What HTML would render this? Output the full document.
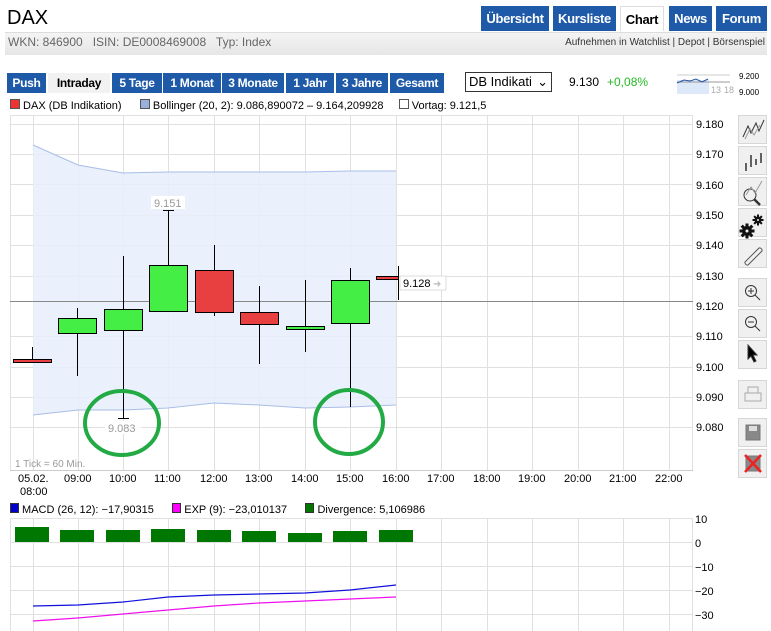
<!DOCTYPE html><html><head><meta charset="utf-8"><style>
body{margin:0;width:771px;height:631px;overflow:hidden;background:#fff;font-family:"Liberation Sans",sans-serif;position:relative}
.a{position:absolute}
.tab{position:absolute;top:6px;height:25px;background:#1f5aa8;color:#fff;font-weight:bold;font-size:13px;line-height:25px;text-align:center;letter-spacing:-0.3px}
.btn{position:absolute;top:73px;height:20px;background:#1f5aa8;color:#fff;font-weight:bold;font-size:12px;line-height:20px;text-align:center;letter-spacing:-0.3px}
.tb{position:absolute;left:738px;width:29px;height:29px;background:#f0f0f0;border:1px solid #d6d6d6;box-sizing:border-box}
svg text{font-family:"Liberation Sans",sans-serif}
</style></head><body>
<div class="a" style="left:7px;top:7px;font-size:20px">DAX</div>
<div class="tab" style="left:481px;width:68px">Übersicht</div>
<div class="tab" style="left:553px;width:63px">Kursliste</div>
<div class="tab" style="left:620px;width:44px;background:#fff;color:#000;border:1px solid #ddd;border-bottom:none;box-sizing:border-box">Chart</div>
<div class="tab" style="left:669px;width:43px">News</div>
<div class="tab" style="left:716px;width:51px">Forum</div>
<div class="a" style="left:5px;top:32px;width:762px;height:22px;background:linear-gradient(#f4f4f4,#e6e6e6);border-top:1px solid #ddd"></div>
<div class="a" style="left:8px;top:35px;font-size:12px;color:#666">WKN: 846900&nbsp;&nbsp; ISIN: DE0008469008&nbsp;&nbsp; Typ: Index</div>
<div class="a" style="right:6px;top:37px;font-size:10px;color:#333">Aufnehmen in Watchlist | Depot | Börsenspiel</div>
<div class="btn" style="left:7px;width:39px">Push</div>
<div class="btn" style="left:48px;width:62px;background:#f2f2f2;color:#000">Intraday</div>
<div class="btn" style="left:112px;width:50px">5 Tage</div>
<div class="btn" style="left:163px;width:58px">1 Monat</div>
<div class="btn" style="left:222px;width:62px">3 Monate</div>
<div class="btn" style="left:286px;width:48px">1 Jahr</div>
<div class="btn" style="left:336px;width:52px">3 Jahre</div>
<div class="btn" style="left:390px;width:54px">Gesamt</div>
<div class="a" style="left:465px;top:72px;width:87px;height:20px;border:1px solid #333;box-sizing:border-box;font-size:13px;line-height:18px;padding-left:3px">DB Indikati <span style="float:right;margin-right:3px">&#8964;</span></div>
<div class="a" style="left:569px;top:75px;font-size:12px">9.130</div>
<div class="a" style="left:607px;top:75px;font-size:12px;color:#22bb22">+0,08%</div>
<svg class="a" style="left:676px;top:70px" width="95" height="26"><rect x="1" y="10" width="32" height="14" fill="#dde8f8"/><line x1="1" y1="12" x2="54" y2="12" stroke="#999"/><line x1="1" y1="5" x2="54" y2="5" stroke="#ccc"/><polyline points="1,13 8,10 14,11 20,9 26,12 32,9" fill="none" stroke="#2255aa"/><text x="35" y="23" font-size="9" fill="#aaa">13</text><text x="48" y="23" font-size="9" fill="#aaa">18</text><text x="63" y="9" font-size="8">9.200</text><text x="63" y="25" font-size="8">9.000</text></svg>
<div class="a" style="left:10px;top:99px;font-size:11px"><span style="display:inline-block;width:8px;height:8px;background:#e33;border:1px solid #555"></span> DAX (DB Indikation)&nbsp;&nbsp;&nbsp;&nbsp;&nbsp; <span style="display:inline-block;width:8px;height:8px;background:#9ab0dc;border:1px solid #555"></span> Bollinger (20, 2): 9.086,890072 – 9.164,209928&nbsp;&nbsp;&nbsp;&nbsp; <span style="display:inline-block;width:8px;height:8px;background:#fff;border:1px solid #555"></span> Vortag: 9.121,5</div>
<div class="a" style="left:10px;top:503px;font-size:11px"><span style="display:inline-block;width:7px;height:8px;background:#00c;border:1px solid #333"></span> MACD (26, 12): −17,90315&nbsp;&nbsp;&nbsp;&nbsp;&nbsp; <span style="display:inline-block;width:7px;height:8px;background:#f0f;border:1px solid #333"></span> EXP (9): −23,010137&nbsp;&nbsp;&nbsp;&nbsp;&nbsp; <span style="display:inline-block;width:7px;height:8px;background:#070;border:1px solid #333"></span> Divergence: 5,106986</div>
<svg class="a" style="left:0;top:0" width="771" height="631">
<g stroke="#e0e0e0" stroke-width="1">
<line x1="10" y1="115.5" x2="693" y2="115.5"/>
<line x1="10" y1="124.5" x2="693" y2="124.5"/><line x1="10" y1="154.5" x2="693" y2="154.5"/><line x1="10" y1="184.5" x2="693" y2="184.5"/><line x1="10" y1="215.5" x2="693" y2="215.5"/><line x1="10" y1="245.5" x2="693" y2="245.5"/><line x1="10" y1="276.5" x2="693" y2="276.5"/><line x1="10" y1="336.5" x2="693" y2="336.5"/><line x1="10" y1="367.5" x2="693" y2="367.5"/><line x1="10" y1="397.5" x2="693" y2="397.5"/><line x1="10" y1="427.5" x2="693" y2="427.5"/>
<line x1="33.5" y1="115" x2="33.5" y2="470"/><line x1="78.5" y1="115" x2="78.5" y2="470"/><line x1="123.5" y1="115" x2="123.5" y2="470"/><line x1="168.5" y1="115" x2="168.5" y2="470"/><line x1="214.5" y1="115" x2="214.5" y2="470"/><line x1="259.5" y1="115" x2="259.5" y2="470"/><line x1="305.5" y1="115" x2="305.5" y2="470"/><line x1="350.5" y1="115" x2="350.5" y2="470"/><line x1="396.5" y1="115" x2="396.5" y2="470"/><line x1="441.5" y1="115" x2="441.5" y2="470"/><line x1="487.5" y1="115" x2="487.5" y2="470"/><line x1="532.5" y1="115" x2="532.5" y2="470"/><line x1="578.5" y1="115" x2="578.5" y2="470"/><line x1="623.5" y1="115" x2="623.5" y2="470"/><line x1="669.5" y1="115" x2="669.5" y2="470"/>
<line x1="10.5" y1="115" x2="10.5" y2="470"/><line x1="692.5" y1="115" x2="692.5" y2="470"/><line x1="10" y1="470.5" x2="693" y2="470.5" stroke="#ccc"/>
<line x1="10" y1="518.5" x2="693" y2="518.5"/><line x1="10" y1="542.5" x2="693" y2="542.5"/><line x1="10" y1="566.5" x2="693" y2="566.5"/><line x1="10" y1="590.5" x2="693" y2="590.5"/><line x1="10" y1="614.5" x2="693" y2="614.5"/>
<line x1="10.5" y1="518" x2="10.5" y2="631"/><line x1="692.5" y1="518" x2="692.5" y2="631"/>
<line x1="33.5" y1="518" x2="33.5" y2="631"/><line x1="78.5" y1="518" x2="78.5" y2="631"/><line x1="123.5" y1="518" x2="123.5" y2="631"/><line x1="168.5" y1="518" x2="168.5" y2="631"/><line x1="214.5" y1="518" x2="214.5" y2="631"/><line x1="259.5" y1="518" x2="259.5" y2="631"/><line x1="305.5" y1="518" x2="305.5" y2="631"/><line x1="350.5" y1="518" x2="350.5" y2="631"/><line x1="396.5" y1="518" x2="396.5" y2="631"/><line x1="441.5" y1="518" x2="441.5" y2="631"/><line x1="487.5" y1="518" x2="487.5" y2="631"/><line x1="532.5" y1="518" x2="532.5" y2="631"/><line x1="578.5" y1="518" x2="578.5" y2="631"/><line x1="623.5" y1="518" x2="623.5" y2="631"/><line x1="669.5" y1="518" x2="669.5" y2="631"/>
</g>
<polygon points="33,145 78,165 123,173 168,172 214,172 259,172 305,172 350,171 396,171 396,405 350,407 305,408 259,405 214,403 168,408 123,410 78,410 33,415" fill="#e6eefb" fill-opacity="0.85"/>
<polyline points="33,145 78,165 123,173 168,172 214,172 259,172 305,172 350,171 396,171" fill="none" stroke="#a9bde6"/>
<polyline points="33,415 78,410 123,410 168,408 214,403 259,405 305,408 350,407 396,405" fill="none" stroke="#a9bde6"/>
<line x1="10" y1="301.5" x2="693" y2="301.5" stroke="#888"/>
<g stroke="#000" stroke-width="1">
<line x1="32.5" y1="347" x2="32.5" y2="363"/><rect x="13.5" y="359.5" width="38" height="3" fill="#e84040"/>
<line x1="77.5" y1="308" x2="77.5" y2="376"/><rect x="58.5" y="318.5" width="38" height="15" fill="#44ee44"/>
<line x1="123.5" y1="256" x2="123.5" y2="418"/><rect x="104.5" y="309.5" width="38" height="21" fill="#44ee44"/><line x1="118" y1="418.5" x2="129" y2="418.5"/>
<line x1="168.5" y1="210" x2="168.5" y2="311"/><rect x="149.5" y="265.5" width="38" height="46" fill="#44ee44"/><line x1="163" y1="210.5" x2="174" y2="210.5"/>
<line x1="214.5" y1="245" x2="214.5" y2="316"/><rect x="195.5" y="270.5" width="38" height="42" fill="#e84040"/>
<line x1="259.5" y1="286" x2="259.5" y2="364"/><rect x="240.5" y="312.5" width="38" height="12" fill="#e84040"/>
<line x1="305.5" y1="280" x2="305.5" y2="352"/><rect x="286.5" y="326.5" width="38" height="3" fill="#44ee44"/>
<line x1="350.5" y1="268" x2="350.5" y2="407"/><rect x="331.5" y="280.5" width="38" height="43" fill="#44ee44"/>
<line x1="398.5" y1="266" x2="398.5" y2="300"/><rect x="376.5" y="276.5" width="22" height="3" fill="#e84040"/>
</g>
<rect x="151" y="196" width="34" height="13" fill="#fff"/><text x="154" y="207" font-size="11" fill="#999">9.151</text>
<rect x="105" y="421" width="36" height="13" fill="#fff"/><text x="108" y="432" font-size="11" fill="#999">9.083</text>
<rect x="400" y="276" width="46" height="14" fill="#fff" stroke="#ddd"/><text x="403" y="287" font-size="11">9.128</text><text x="433" y="287" font-size="10" fill="#bbb">➜</text>
<ellipse cx="122" cy="423" rx="37" ry="32" fill="none" stroke="#22aa44" stroke-width="4"/>
<ellipse cx="349" cy="422" rx="34" ry="32" fill="none" stroke="#22aa44" stroke-width="4"/>
<text x="15" y="467" font-size="10" fill="#999">1 Tick = 60 Min.</text>
<g font-size="11">
<text x="696" y="128">9.180</text><text x="696" y="158">9.170</text><text x="696" y="189">9.160</text><text x="696" y="219">9.150</text><text x="696" y="249">9.140</text><text x="696" y="280">9.130</text><text x="696" y="310">9.120</text><text x="696" y="340">9.110</text><text x="696" y="371">9.100</text><text x="696" y="401">9.090</text><text x="696" y="431">9.080</text>
<text x="18" y="482">05.02.</text><text x="20" y="495">08:00</text>
<text x="64" y="482">09:00</text><text x="109" y="482">10:00</text><text x="154" y="482">11:00</text><text x="200" y="482">12:00</text><text x="245" y="482">13:00</text><text x="291" y="482">14:00</text><text x="336" y="482">15:00</text><text x="382" y="482">16:00</text><text x="427" y="482">17:00</text><text x="473" y="482">18:00</text><text x="518" y="482">19:00</text><text x="564" y="482">20:00</text><text x="609" y="482">21:00</text><text x="655" y="482">22:00</text>
<text x="695" y="523">10</text><text x="695" y="547">0</text><text x="695" y="571">−10</text><text x="695" y="595">−20</text><text x="695" y="619">−30</text>
</g>
<g fill="#007700"><rect x="15" y="527" width="34" height="15"/><rect x="60" y="530" width="34" height="12"/><rect x="106" y="530" width="34" height="12"/><rect x="151" y="529" width="34" height="13"/><rect x="197" y="530" width="34" height="12"/><rect x="242" y="531" width="34" height="11"/><rect x="288" y="533" width="34" height="9"/><rect x="333" y="531" width="34" height="11"/><rect x="379" y="530" width="34" height="12"/></g>
<polyline points="33,606 78,605 123,602 168,597 214,595 259,594 305,593 350,590 396,585" fill="none" stroke="#1111dd" stroke-width="1.2"/>
<polyline points="33,621 78,618 123,614 168,610 214,606 259,603 305,601 350,599 396,597" fill="none" stroke="#ee11ee" stroke-width="1.2"/>
</svg>
<div class="tb" style="top:115px"></div><div class="tb" style="top:146px"></div><div class="tb" style="top:177px"></div><div class="tb" style="top:208px"></div><div class="tb" style="top:239px"></div>
<div class="tb" style="top:278px"></div><div class="tb" style="top:309px"></div><div class="tb" style="top:340px"></div>
<div class="tb" style="top:380px"></div><div class="tb" style="top:418px"></div><div class="tb" style="top:449px"></div>
<svg class="a" style="left:738px;top:115px" width="30" height="370" fill="none" stroke="#333">
<polyline points="5,22 10,11 13,18 18,8 21,16 26,5"/><polyline points="7,24 12,14 16,20 22,10" stroke="#999"/>
<path d="M8 48v8M13 40v12M18 44v6M23 38v10" stroke="#333" stroke-width="1.5"/>
<circle cx="12" cy="80" r="6"/><path d="M16 84l6 6" stroke-width="2.5"/><polyline points="8,80 13,72 17,78 24,66" stroke="#999"/>
<g fill="#111" stroke="none"><circle cx="9" cy="116" r="5"/><rect x="7.5" y="108.5" width="3" height="15"/><rect x="1.5" y="114.5" width="15" height="3"/><rect x="7.5" y="108.5" width="3" height="15" transform="rotate(45 9 116)"/><rect x="7.5" y="108.5" width="3" height="15" transform="rotate(-45 9 116)"/>
<circle cx="20" cy="105" r="3.5"/><rect x="19" y="99.5" width="2" height="11"/><rect x="14.5" y="104" width="11" height="2"/><rect x="19" y="99.5" width="2" height="11" transform="rotate(45 20 105)"/><rect x="19" y="99.5" width="2" height="11" transform="rotate(-45 20 105)"/></g>
<circle cx="9" cy="116" r="1.5" fill="#f0f0f0" stroke="none"/><circle cx="20" cy="105" r="1" fill="#f0f0f0" stroke="none"/>
<path d="M7 147l14-14a2.5 2.5 0 0 1 3 3l-14 14a2.5 2.5 0 0 1-3-3z" stroke="#555"/>
<circle cx="13" cy="176" r="5.5"/><path d="M10 176h6M13 173v6M17 180l5 5" stroke="#333"/>
<circle cx="13" cy="207" r="5.5"/><path d="M10 207h6M17 211l5 5"/>
<path d="M10 230v14l3-3 3 6 2-1-3-6h4z" fill="#000"/>
<rect x="7" y="278" width="16" height="8" stroke="#aaa"/><path d="M10 278v-6h10v6" stroke="#aaa"/>
<rect x="8" y="310" width="14" height="15" fill="#888" stroke="#777"/><rect x="11" y="311" width="8" height="5" fill="#ddd" stroke="none"/>
<rect x="8" y="341" width="14" height="15" fill="#888" stroke="#777"/><path d="M7 340l16 17M23 340l-16 17" stroke="#e22" stroke-width="2.5"/>
</svg>
</body></html>
